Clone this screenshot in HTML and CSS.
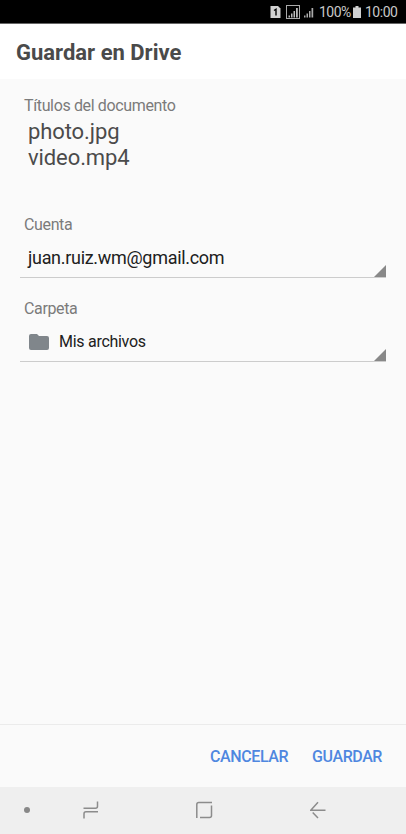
FILE: index.html
```html
<!DOCTYPE html>
<html lang="es">
  <head>
    <meta charset="utf-8">
    <title>Guardar en Drive</title>
    <link rel="stylesheet" href="styles.css">
  </head>
  <body>
    <div class="status">
      <svg class="status-icons" width="60" height="23" viewBox="0 0 60 23">
        <path d="M.5 6h7.500l2.500 2.500V18H.5z" fill="#d0d0d0"/>
        <path d="M4 10.500l2-1.300V15.500" fill="none" stroke="#000" stroke-width="1.400"/>
        <rect x="16.500" y="5.500" width="13" height="13" fill="none" stroke="#aaa"/>
        <path d="M18.500 15.500h1.500v2h-1.500zM21 13.500h1.500v4H21zM23.500 11h1.500v6.500h-1.500zM26 8h1.800v9.500H26z" fill="#bbb"/>
        <path d="M34 15.500h1.500v2H34zM36.500 13.500H38v4h-1.500zM39 11h1.500v6.500H39zM41.500 8h1.700v9.500h-1.700z" fill="#aaa"/>
      </svg>
      <span class="battery">100%</span>
      <svg class="battery-icon" width="8" height="23" viewBox="0 0 8 23">
        <path d="M2.500 6h3v1.500H8V18H0V7.500h2.500z" fill="#d0d0d0"/>
      </svg>
      <span class="clock">10:00</span>
    </div>

    <h1 class="title">Guardar en Drive</h1>

    <div class="content">
      <p class="label">Títulos del documento</p>
      <div class="files">photo.jpg<br>video.mp4</div>

      <p class="label account-label">Cuenta</p>
      <div class="select account">
        <span>juan.ruiz.wm@gmail.com</span>
        <svg class="corner" width="12" height="12"><path d="M12 0v12H0z" fill="#888"/></svg>
      </div>

      <p class="label folder-label">Carpeta</p>
      <div class="select folder">
        <svg class="folder-icon" width="20" height="16" viewBox="0 0 20 16">
          <path d="M2 0h6l2 2h8a2 2 0 0 1 2 2v10a2 2 0 0 1-2 2H2a2 2 0 0 1-2-2V2a2 2 0 0 1 2-2z" fill="#80868b"/>
        </svg>
        <span>Mis archivos</span>
        <svg class="corner" width="12" height="12"><path d="M12 0v12H0z" fill="#888"/></svg>
      </div>
    </div>

    <div class="actions">
      <button class="btn cancel">CANCELAR</button>
      <button class="btn save">GUARDAR</button>
    </div>

    <div class="nav">
      <svg class="dot" width="6" height="18"><circle cx="3" cy="9" r="3" fill="#888"/></svg>
      <svg class="recents" width="16" height="18" viewBox="0 0 16 18">
        <path d="M.5 7.200h12q2 0 2-2V.5M15 10.800H3q-2 0-2 2v4.700"/>
      </svg>
      <svg class="home" width="17" height="18" viewBox="0 0 17 18">
        <path d="M.800 17V3.500q0-2 2-2H16M15.500 4.500v10q0 2-2 2H4"/>
      </svg>
      <svg class="back" width="16" height="18" viewBox="0 0 16 18">
        <path d="M15.500 9.200H.800L8 1.200M2.700 11.500L8 17"/>
      </svg>
    </div>
  </body>
</html>
```
FILE: styles.css
```css
body{
  margin: 0;
  height: 834px;
  display: flex;
  flex-direction: column;
  overflow: hidden;
  background-color: #fafafa;
  font-family: Roboto, "Liberation Sans", sans-serif;
}
.status{
  height: 23px;
  display: flex;
  border-bottom: 1px solid #666;
  background-color: black;
  color: #c8c8c8;
  font-size: 14px;
  letter-spacing: -0.5px;
  line-height: 25px;
}
.status-icons{
  margin-left: 270px;
  margin-right: -11px;
}
.battery{
  width: 34px;
}
.clock{
  margin-left: 4px;
}
.title{
  height: 55px;
  margin: 0;
  padding-left: 16px;
  background-color: white;
  color: #4a4a4a;
  font-size: 22px;
  line-height: 57px;
}
.content{
  flex: 1;
  padding: 17px 20px 0;
}
.label{
  margin: 0;
  padding-left: 4px;
  color: #7b7b7b;
  font-size: 16px;
  letter-spacing: -0.36px;
  line-height: 20px;
}
.files{
  margin-top: 3px;
  padding-left: 8px;
  color: #4b4b4b;
  font-size: 22px;
  letter-spacing: -0.1px;
  line-height: 26px;
}
.account-label{
  margin-top: 44px;
}
.folder-label{
  margin-top: 21px;
}
.select{
  height: 39px;
  display: flex;
  align-items: center;
  padding-top: 3px;
  border-bottom: 1px solid #ccc;
  color: #202020;
}
.account{
  padding-left: 8px;
  font-size: 18px;
  letter-spacing: -0.3px;
}
.folder{
  padding-left: 9px;
  font-size: 16px;
  letter-spacing: -0.28px;
}
.folder-icon{
  margin-right: 10px;
}
.corner{
  align-self: flex-end;
  margin-left: auto;
}
.actions{
  height: 62px;
  display: flex;
  align-items: center;
  justify-content: flex-end;
  gap: 24px;
  padding-right: 24px;
  border-top: 1px solid #ebebeb;
}
.btn{
  padding: 0;
  border: none;
  background: none;
  color: #4f87e0;
  font-family: inherit;
  font-size: 16px;
  letter-spacing: -0.42px;
  font-weight: 500;
}
.nav{
  height: 46px;
  padding-bottom: 1px;
  display: flex;
  align-items: center;
  background-color: #efefef;
}
.nav path{
  fill: none;
  stroke: #8c8c8c;
  stroke-width: 1.500;
}
.dot{
  margin-left: 24px;
}
.recents{
  margin-left: 53px;
}
.home{
  margin-left: 97px;
}
.back{
  margin-left: 97px;
}
```
